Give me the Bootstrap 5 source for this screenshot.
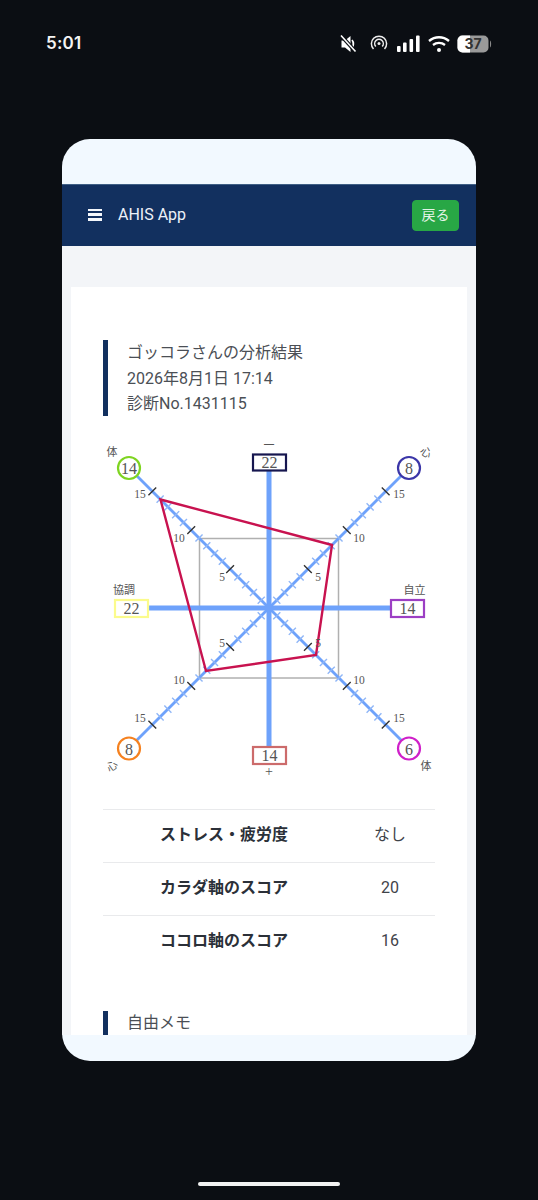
<!DOCTYPE html>
<html lang="ja">
<head>
<meta charset="utf-8">
<title>AHIS App</title>
<meta name="viewport" content="width=device-width, initial-scale=1">
<link href="https://cdn.jsdelivr.net/npm/bootstrap@5.3.0/dist/css/bootstrap.min.css" rel="stylesheet">
<style>
html,body{height:1200px;overflow:hidden}
body{background:#0b0e13;font-family:Roboto,"Noto Sans CJK JP",sans-serif;color:#454a50;width:538px}
.statusbar{height:139px;padding:33px 46px 0 46px;align-items:flex-start;color:#fff}
.clock{font:600 17px/20px Inter,sans-serif;letter-spacing:.2px;color:#f4f4f4}
.status-icons{margin-top:0;gap:0}
.phone{width:414px;height:922px;margin-left:62px;border-radius:28px;overflow:hidden;background:#f2f9ff}
.phone-top{height:45px}
.appbar{height:62px;background:#12305f;padding:0 17px 0 26px;border-top:1px solid #3f5f85;color:#eef3fa}
.burger{width:14px;height:12px;margin:0 16px 2px 0;flex-direction:column;justify-content:space-between}
.burger span{display:block;height:2.6px;background:#f4f7fb}
.appname{font-size:16px;color:#edf2f8;padding:0;margin:0 0 1px}
.backbtn{width:47px;height:31px;padding:0;font-size:14px;line-height:29px;background:#28a745;border-color:#28a745;border-radius:4px;color:#e3f4e7}
.scrollarea{height:789px;overflow:hidden;background:#f3f5f8;padding:41px 9px 0}
.sheet{background:#fff;padding:53px 32px 0;height:900px}
.headline{border-left:5px solid #12305f;padding-left:19px;font-size:16px;line-height:25.6px;height:76px;color:#4b4f55}
.chart{display:block;margin-top:14px;width:332px;height:360px}
.chart text{font-family:"Liberation Serif","Noto Sans CJK JP",serif;text-anchor:middle;dominant-baseline:central;fill:#555}
.axis-thick{stroke:#6ea2fb;stroke-width:5}
.axis-thin{stroke:#6ea2fb;stroke-width:2.8}
.tick-blue{stroke:#8fb6f7;stroke-width:1.4}
.tick-black{stroke:#333;stroke-width:1.4}
.num{font-size:16px}
.scale{font-size:11.500px}
.tag{font-size:11px}
.score-table{margin:19px 0 0;--bs-table-border-color:#e9eaec;color:#3c4046;border-top:1px solid #e9eaec}
.score-table td{padding:0 0 2px;height:53px;vertical-align:middle;text-align:center;font-size:16px;color:#3f4349}
.score-table tr:last-child td{border-bottom:0}
.score-label{width:242px;font-weight:700;color:#2b3038!important}
.memo{margin-top:42px;border-left:5px solid #12305f;padding-left:19px;font-size:16px;line-height:24px;height:24px;color:#4b4f55}
.homebar{width:142px;height:4px;background:#f2f2f2;border-radius:2px;margin:121px 0 0 198px}
</style>
</head>
<body>
<div class="statusbar d-flex justify-content-between">
  <div class="clock">5:01</div>
  <svg class="status-icons" width="152" height="20" viewBox="340 33 152 20" aria-hidden="true">
    <path d="M341.500 40.500h3.500l5.500-4.500v16l-5.500-4.500h-3.500z" fill="#fff"/>
    <path d="M352 40c1.800 2 1.800 6 0 8" stroke="#fff" stroke-width="1.800" fill="none"/>
    <path d="M340.500 35l15 16.500" stroke="#0b0e13" stroke-width="3.800"/><path d="M341 35.500l14.500 16" stroke="#fff" stroke-width="1.600"/>
    <g fill="none" stroke="#eee" stroke-width="1.500"><path d="M373.500 49a7.600 7.600 0 1 1 11 0"/><path d="M375.800 46.500a4.300 4.300 0 1 1 6.400 0"/></g>
    <circle cx="379" cy="43.500" r="1.500" fill="#eee"/>
    <g fill="#fff"><rect x="397" y="46" width="3.600" height="6" rx="1"/><rect x="403" y="42.500" width="3.600" height="9.500" rx="1"/><rect x="409.500" y="39" width="3.600" height="13" rx="1"/><rect x="416" y="35.500" width="3.600" height="16.500" rx="1"/></g>
    <g fill="none" stroke="#fff" stroke-width="2.300"><path d="M429 41c6-5 14-5 20 0"/><path d="M433 45c3.500-2.800 8.500-2.800 12 0"/></g>
    <circle cx="439" cy="50" r="2" fill="#fff"/>
    <rect x="457.500" y="35.500" width="31" height="17" rx="5" fill="#9a9a9a"/>
    <path d="M462.500 35.500h7.500v17h-7.500a5 5 0 0 1-5-5v-7a5 5 0 0 1 5-5z" fill="#fff"/>
    <path d="M490 40.500c1.500.5 1.500 6.500 0 7z" fill="#8a8a8a"/>
    <text x="473" y="49" text-anchor="middle" font-family="Inter,sans-serif" font-weight="700" font-size="14" fill="#333">37</text>
  </svg>
</div>

<div class="phone">
  <div class="phone-top"></div>
  <nav class="navbar appbar d-flex align-items-center justify-content-between flex-nowrap">
    <div class="d-flex align-items-center">
      <div class="burger d-flex"><span></span><span></span><span></span></div>
      <span class="navbar-brand appname">AHIS App</span>
    </div>
    <button type="button" class="btn btn-success backbtn">戻る</button>
  </nav>
  <div class="scrollarea">
    <div class="sheet">
      <div class="headline">
        <div>ゴッコラさんの分析結果</div>
        <div>2026年8月1日 17:14</div>
        <div>診断No.1431115</div>
      </div>

      <svg class="chart" viewBox="103 430 332 360" role="img" aria-label="分析チャート">
        <defs>
          <g id="arm">
            <line class="axis-thin" x1="0" y1="0" x2="192" y2="0"/>
            <path class="tick-blue" fill="none" d="M11 -5V5M22 -5V5M33 -5V5M44 -5V5M66 -5V5M77 -5V5M88 -5V5M99 -5V5M121 -5V5M132 -5V5M143 -5V5M154 -5V5"/>
          </g>
          <path id="major" class="tick-black" fill="none" d="M55 -5.500V5.500M110 -5.500V5.500M165 -5.500V5.500"/>
        </defs>
        <rect x="199.500" y="538.500" width="139" height="139.500" fill="none" stroke="#b0b0b0" stroke-width="1.500"/>
        <line class="axis-thick" x1="269" y1="470" x2="269" y2="747"/>
        <line class="axis-thick" x1="148" y1="608" x2="391" y2="608"/>
        <use href="#arm" transform="translate(269 608) rotate(-135)"/>
        <use href="#arm" transform="translate(269 608) rotate(-45)"/>
        <use href="#arm" transform="translate(269 608) rotate(45)"/>
        <use href="#arm" transform="translate(269 608) rotate(135)"/>
        <polygon points="160.500,499.500 332,545 316,655 206,671" fill="none" stroke="#c8124f" stroke-width="2.400"/>
        <use href="#major" transform="translate(269 608) rotate(-135)"/>
        <use href="#major" transform="translate(269 608) rotate(-45)"/>
        <use href="#major" transform="translate(269 608) rotate(45)"/>
        <use href="#major" transform="translate(269 608) rotate(135)"/>

        <g class="scale">
          <text x="140" y="494">15</text><text x="179" y="538">10</text><text x="222" y="577">5</text>
          <text x="399" y="494">15</text><text x="359" y="538">10</text><text x="318" y="577">5</text>
          <text x="140" y="718">15</text><text x="179" y="680">10</text><text x="222" y="643">5</text>
          <text x="399" y="718">15</text><text x="359" y="680">10</text><text x="318" y="643">5</text>
        </g>

        <g fill="#fff" stroke-width="2.200">
          <rect x="253" y="454.500" width="33" height="16" stroke="#16164f"/>
          <rect x="253" y="747" width="33" height="17" stroke="#cc6b6b"/>
          <rect x="115" y="600" width="33" height="17" stroke="#fbfb8c"/>
          <rect x="391" y="600" width="33" height="17" stroke="#9c3fc4"/>
          <circle cx="129" cy="468" r="11" stroke="#7fd421"/>
          <circle cx="409" cy="468" r="11" stroke="#3b36a8"/>
          <circle cx="129" cy="748.500" r="11" stroke="#f5811f"/>
          <circle cx="409" cy="748.500" r="11" stroke="#cf20c9"/>
        </g>
        <g class="num">
          <text x="269.500" y="462.500">22</text>
          <text x="269.500" y="755.500">14</text>
          <text x="131.500" y="608.500">22</text>
          <text x="407.500" y="608.500">14</text>
          <text x="129" y="468.500">14</text>
          <text x="409" y="468.500">8</text>
          <text x="129" y="749">8</text>
          <text x="409" y="749">6</text>
        </g>
        <g class="tag">
          <text x="269" y="445">一</text>
          <text x="269" y="771" font-size="14">+</text>
          <text x="124" y="590">協調</text>
          <text x="414.500" y="590">自立</text>
          <text x="112" y="452">体</text>
          <text x="426" y="452.500" transform="rotate(35 426 452.500)">心</text>
          <text x="112" y="766" transform="rotate(-35 112 766)">心</text>
          <text x="426" y="766">体</text>
        </g>
      </svg>

      <table class="table score-table">
        <tbody>
          <tr><td class="score-label">ストレス・疲労度</td><td>なし</td></tr>
          <tr><td class="score-label">カラダ軸のスコア</td><td>20</td></tr>
          <tr><td class="score-label">ココロ軸のスコア</td><td>16</td></tr>
        </tbody>
      </table>

      <div class="memo">自由メモ</div>
    </div>
  </div>
</div>
<div class="homebar"></div>
<script src="https://cdn.jsdelivr.net/npm/bootstrap@5.3.0/dist/js/bootstrap.bundle.min.js"></script>
</body>
</html>
